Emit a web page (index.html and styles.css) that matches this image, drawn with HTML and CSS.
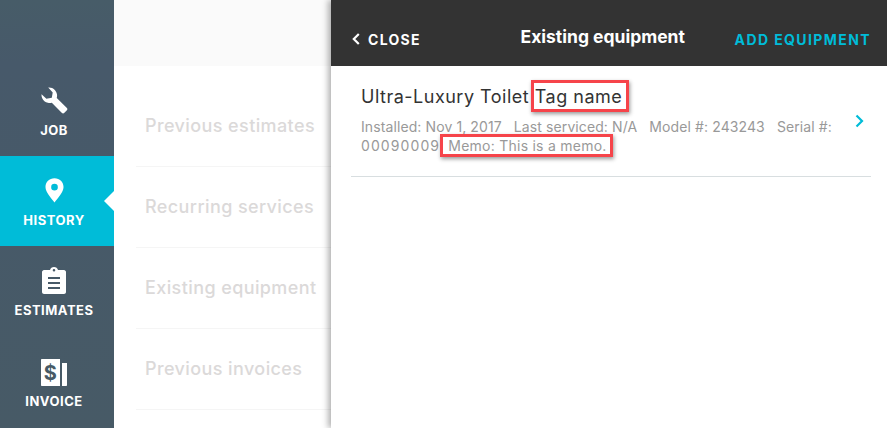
FILE: index.html
```html
<!DOCTYPE html>
<html lang="en">
<head>
  <meta charset="UTF-8" />
  <title>Existing equipment</title>
  <link rel="stylesheet" href="styles.css">
</head>
<body>
  <nav class="sidebar">
    <a class="nav-item">
      <svg class="nav-icon" width="29" height="28" viewBox="0 0 30 30"><path fill="#fff" d="M8 .6a9 9 0 0 1 9.500 11.500L28.500 23a2 2 0 0 1 0 3L26 28.500a2 2 0 0 1-3 0L12 17.500A9 9 0 0 1 .6 8L6 13l6-1 1-6z"/></svg>
      <span>JOB</span>
    </a>
    <a class="nav-item active">
      <svg class="nav-icon" width="19" height="26" viewBox="0 0 20 26"><path fill="#fff" fill-rule="evenodd" d="M10 0C4.500 0 .5 4 .5 9.300.5 15 6.500 21 10 25.500 13.500 21 19.500 15 19.500 9.300 19.500 4 15.500 0 10 0zm0 6a3.500 3.500 0 1 1 0 7 3.500 3.500 0 0 1 0-7z"/></svg>
      <span>HISTORY</span>
    </a>
    <a class="nav-item">
      <svg class="nav-icon" width="24" height="27" viewBox="0 0 24 27"><path fill="#fff" fill-rule="evenodd" d="M2 3h6c.5-1.800 2-3 4-3s3.500 1.200 4 3h6c1 0 2 1 2 2v20c0 1-1 2-2 2H2c-1 0-2-1-2-2V5c0-1 1-2 2-2zm10-1a1.300 1.300 0 1 0 0 2.600A1.300 1.300 0 0 0 12 2zM6 10v2h12v-2zm0 5v2h12v-2zm0 5v2h12v-2z"/></svg>
      <span>ESTIMATES</span>
    </a>
    <a class="nav-item">
      <svg class="nav-icon nav-icon-invoice" width="26" height="27" viewBox="0 0 26 27"><path fill="#fff" d="M1 0h18v27H1c-.6 0-1-.4-1-1V1c0-.6.4-1 1-1zM21 4h5v22c0 .6-.4 1-1 1h-4z"/><text x="9.500" y="21" class="dollar">$</text></svg>
      <span>INVOICE</span>
    </a>
  </nav>

  <main class="history">
    <div class="history-top"></div>
    <ul class="history-list">
      <li>Previous estimates</li>
      <li>Recurring services</li>
      <li>Existing equipment</li>
      <li>Previous invoices</li>
    </ul>
  </main>

  <section class="panel">
    <header class="panel-head">
      <a class="close">
        <svg width="8" height="12" viewBox="0 0 8 12"><path fill="none" stroke="#fff" stroke-width="2.200" d="M6.800 1 1.800 6l5 5"/></svg>
        CLOSE
      </a>
      <h2>Existing equipment</h2>
      <a class="add">ADD EQUIPMENT</a>
    </header>
    <div class="equipment">
      <div class="equipment-text">
        <h3>Ultra-Luxury Toilet <span class="marked marked-tag">Tag name</span></h3>
        <p>Installed: Nov 1, 2017 &nbsp; Last serviced: N/A &nbsp; Model #: 243243 &nbsp; Serial #: <span class="serial">00090009</span> &nbsp;<span class="marked marked-memo">Memo: This is a memo.</span></p>
      </div>
      <svg class="chevron" width="9" height="14" viewBox="0 0 9 14"><path fill="none" stroke="#00bcd8" stroke-width="2.200" d="M1.500 1.500 7 7l-5.500 5.500"/></svg>
    </div>
  </section>
</body>
</html>
```

FILE: styles.css
```css
* {
  box-sizing: border-box;
}
body {
  display: flex;
  width: 887px;
  height: 428px;
  margin: 0;
  overflow: hidden;
  background: #fff;
  font-family: Inter, 'Noto Sans', sans-serif;
}
.sidebar {
  flex: 0 0 114px;
  padding-top: 66px;
  background: linear-gradient(to bottom, #475c68, #47596a 15%, #475a66);
  color: #fff;
}
.nav-item {
  position: relative;
  display: flex;
  flex-direction: column;
  align-items: center;
  height: 90px;
  padding: 21px 6px 0 0;
  font-size: 13px;
  font-weight: 700;
  letter-spacing: 0.5px;
}
.nav-icon {
  height: 27px;
  margin-bottom: 8px;
}
.nav-icon-invoice {
  margin: 2px 0 7px;
}
.nav-item.active {
  background: #00bcd8;
}
.nav-item.active::after {
  content: "";
  position: absolute;
  right: 0;
  top: 35px;
  border: 10px solid transparent;
  border-left: 0;
  border-right-color: #fff;
}
.dollar {
  fill: #475a66;
  font-size: 20px;
  font-weight: 700;
  text-anchor: middle;
}
.history {
  flex: 0 0 217px;
}
.history-top {
  height: 66px;
  background: #fafafa;
}
.history-list {
  list-style: none;
  margin: 0 0 0 22px;
  padding: 0;
}
.history-list li {
  height: 81px;
  padding: 28px 0 0 9px;
  border-bottom: 1px solid #f5f5f5;
  font-size: 18px;
  line-height: 24px;
  letter-spacing: 0.4px;
  font-weight: 500;
  color: #dbd9d9;
  white-space: nowrap;
}
.history-list li:first-child {
  height: 101px;
  padding-top: 48px;
}
.panel {
  flex: 1;
  position: relative;
  background: #fff;
  box-shadow: -3px 0 6px rgba(0, 0, 0, 0.3);
}
.panel-head {
  display: flex;
  align-items: center;
  justify-content: space-between;
  height: 66px;
  padding: 12px 16px 0 21px;
  background: #333;
  color: #fff;
}
.close {
  display: flex;
  align-items: center;
  gap: 8px;
  font-size: 14px;
  font-weight: 700;
  letter-spacing: 1.300px;
}
.panel-head h2 {
  margin: -6px 0 0 50px;
  font-size: 17.500px;
  font-weight: 700;
}
.add {
  font-size: 14px;
  font-weight: 700;
  letter-spacing: 1.400px;
  color: #00bcd8;
}
.equipment {
  display: flex;
  justify-content: space-between;
  margin: 0 16px 0 20px;
  height: 111px;
  padding: 19px 7px 0 10px;
  border-bottom: 1px solid #d8dee0;
}
.equipment-text {
  width: 474px;
}
.equipment h3 {
  margin: 0 0 8px;
  font-size: 18px;
  line-height: 24px;
  letter-spacing: 0.5px;
  font-weight: 400;
  color: #333;
}
.equipment p {
  margin: 0;
  font-size: 14px;
  line-height: 19px;
  letter-spacing: 0.1px;
  color: #999;
}
.serial {
  letter-spacing: 1.100px;
}
.chevron {
  margin-top: 29px;
}
.marked {
  position: relative;
}
.marked-memo {
  letter-spacing: 0.25px;
}
.marked::after {
  content: "";
  position: absolute;
  border: 3px solid #f6444a;
  box-shadow: 1px 2px 4px rgba(0, 0, 0, 0.4);
}
.marked-tag::after {
  left: -4px;
  right: -7px;
  top: -6px;
  bottom: -5px;
}
.marked-memo::after {
  left: -8px;
  right: -6px;
  top: -3px;
  bottom: -3px;
}
```
